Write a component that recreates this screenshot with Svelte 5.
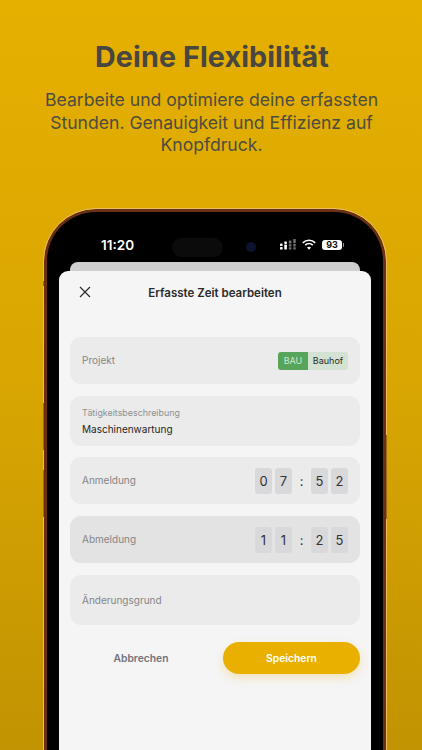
<script lang="ts">
  const felder = {
    an: ["0", "7", "5", "2"],
    ab: ["1", "1", "2", "5"],
  };
</script>

{#snippet ziffern(z: string[])}
  <div class="uhr">
    <span class="ziffer">{z[0]}</span>
    <span class="ziffer">{z[1]}</span>
    <span class="doppel">:</span>
    <span class="ziffer">{z[2]}</span>
    <span class="ziffer">{z[3]}</span>
  </div>
{/snippet}

<main class="seite">
  <header class="kopf">
    <h1>Deine Flexibilität</h1>
    <p>Bearbeite und optimiere deine erfassten Stunden. Genauigkeit und Effizienz auf Knopfdruck.</p>
  </header>

  <div class="telefon">
    <i class="taste marke-a"></i>
    <i class="taste laut1"></i>
    <i class="taste laut2"></i>
    <i class="taste power"></i>
    <div class="rahmen">
      <div class="status">
        <span class="zeit">11:20</span>
        <div class="insel"></div>
        <i class="kamera"></i>
        <div class="icons">
          <svg width="16" height="11" viewBox="0 0 16 11" fill="#fff">
            <rect x="0" y="4.500" width="2.600" height="2.400" rx=".6" />
            <rect x="0" y="8" width="2.600" height="2.600" rx=".6" />
            <rect x="4.300" y="2.500" width="2.600" height="2.400" rx=".6" />
            <rect x="4.300" y="5.600" width="2.600" height="5" rx=".6" />
            <rect x="8.800" y="1.500" width="2.600" height="3" rx=".6" opacity=".45" />
            <rect x="8.800" y="5.200" width="2.600" height="2.300" rx=".6" opacity=".45" />
            <rect x="8.800" y="8.200" width="2.600" height="2.400" rx=".6" opacity=".45" />
            <rect x="13.300" y="0" width="2.400" height="4" rx=".6" opacity=".45" />
            <rect x="13.300" y="4.800" width="2.400" height="2.700" rx=".6" opacity=".45" />
            <rect x="13.300" y="8.200" width="2.400" height="2.400" rx=".6" opacity=".45" />
          </svg>
          <svg class="wlan" width="14" height="11" viewBox="0 0 14 11" fill="none" stroke="#fff" stroke-width="1.700">
            <path d="M.8 3.800 C4.300 .4 9.700 .4 13.200 3.800" />
            <path d="M3.200 6.200 C5.400 4.200 8.600 4.200 10.800 6.200" />
            <path d="M7 10.800 L5 8.400 C6.200 7.500 7.800 7.500 9 8.400 Z" fill="#fff" stroke="none" />
          </svg>
          <div class="akku"><span>93</span></div>
        </div>
      </div>

      <div class="blatt-hinten"></div>
      <section class="blatt">
        <div class="titel">
          <svg class="schliessen" width="12" height="12" viewBox="0 0 12 12" fill="none" stroke="#2c2c2c" stroke-width="1.200">
            <path d="M1 1 L11 11 M11 1 L1 11" />
          </svg>
          <span>Erfasste Zeit bearbeiten</span>
        </div>

        <div class="feld zeile projekt">
          <span class="etikett">Projekt</span>
          <div class="marke"><b>BAU</b><span>Bauhof</span></div>
        </div>

        <div class="feld taetigkeit">
          <span class="klein">Tätigkeitsbeschreibung</span>
          <span class="wert">Maschinenwartung</span>
        </div>

        <div class="feld zeile anmeldung">
          <span class="etikett">Anmeldung</span>
          {@render ziffern(felder.an)}
        </div>

        <div class="feld zeile abmeldung">
          <span class="etikett">Abmeldung</span>
          {@render ziffern(felder.ab)}
        </div>

        <div class="feld zeile grund">
          <span class="etikett">Änderungsgrund</span>
        </div>

        <div class="aktionen">
          <button class="abbrechen">Abbrechen</button>
          <button class="speichern">Speichern</button>
        </div>
      </section>
    </div>
  </div>
</main>

<style>
  :global(body) {
    margin: 0;
  }

  .seite {
    width: 422px;
    height: 750px;
    overflow: hidden;
    box-sizing: border-box;
    background: linear-gradient(180deg, #e6b000 0%, #d9a602 50%, #c29302 100%);
    font-family: Inter, "Noto Sans", sans-serif;
    padding-top: 39px;
  }

  .kopf {
    text-align: center;
    color: #4d4c42;
    height: 170px;
  }

  h1 {
    margin: 0;
    font-size: 28.700px;
    line-height: 36px;
    font-weight: 700;
    letter-spacing: 0.1px;
    color: #474641;
    padding-left: 2px;
  }

  .kopf p {
    margin: 14px auto 0;
    width: 350px;
    font-size: 17.600px;
    line-height: 22.500px;
    font-weight: 400;
    padding-left: 1px;
  }

  .telefon {
    position: relative;
    width: 342px;
    margin-left: 44px;
  }

  .taste {
    position: absolute;
    z-index: 1;
    width: 1px;
    background: #9c6a1c;
  }

  .marke-a { left: -1px; top: 72px; height: 5px; }
  .laut1 { left: -1px; top: 194px; height: 47px; }
  .laut2 { left: -1px; top: 261px; height: 47px; }
  .power { right: -1px; top: 226px; height: 84px; }

  .rahmen {
    box-sizing: border-box;
    height: 620px;
    padding: 0 12px;
    background: #000;
    border-radius: 52px 52px 0 0;
    border: 3px solid #6a3014;
    border-bottom: 0;
    outline: 1.500px solid #ecbd62;
    display: flex;
    flex-direction: column;
    align-items: center;
  }

  .status {
    width: 100%;
    height: 50px;
    flex: none;
    padding-top: 15px;
    box-sizing: border-box;
    display: flex;
    align-items: center;
    color: #fff;
    position: relative;
  }

  .zeit {
    margin-left: 42px;
    font-size: 13.500px;
    font-weight: 600;
  }

  .insel {
    position: absolute;
    left: 113px;
    top: 26px;
    width: 51px;
    height: 19px;
    border-radius: 10px;
    background: #0b0b0c;
  }

  .kamera {
    position: absolute;
    left: 187px;
    top: 30px;
    width: 10px;
    height: 10px;
    border-radius: 50%;
    background: #0d1230;
  }

  .icons {
    margin-left: auto;
    margin-right: 27px;
    display: flex;
    align-items: center;
    gap: 6px;
  }

  .akku {
    position: relative;
    width: 20px;
    height: 10px;
    background: #fff;
    border-radius: 3px;
    color: #111;
    font-size: 9px;
    font-weight: 700;
    line-height: 10px;
    text-align: center;
    margin-right: 2px;
  }

  .akku::after {
    content: "";
    position: absolute;
    right: -2px;
    top: 3px;
    width: 1px;
    height: 4px;
    background: #8a8a8a;
  }

  .blatt-hinten {
    width: 290px;
    height: 9px;
    background: #cfcfcf;
    border-radius: 8px 8px 0 0;
    flex: none;
  }

  .blatt {
    width: 100%;
    flex: 1;
    background: #f5f5f5;
    border-radius: 9px 9px 0 0;
    padding: 0 11px;
    box-sizing: border-box;
  }

  .titel {
    height: 43px;
    position: relative;
    display: flex;
    align-items: center;
    justify-content: center;
    font-size: 11.500px;
    font-weight: 600;
    color: #2b2b2b;
  }

  .schliessen {
    position: absolute;
    left: 9px;
    top: 15px;
  }

  .feld {
    background: #ebebeb;
    border-radius: 11px;
    padding: 0 12px;
    box-sizing: border-box;
  }

  .zeile {
    display: flex;
    align-items: center;
    justify-content: space-between;
  }

  .projekt { height: 47px; margin-top: 23px; }
  .taetigkeit {
    height: 50px;
    margin-top: 12px;
    padding-bottom: 1px;
    display: flex;
    flex-direction: column;
    justify-content: center;
    gap: 5px;
  }
  .anmeldung { height: 47px; margin-top: 11px; }
  .abmeldung { height: 47px; margin-top: 12px; background: #e3e3e3; }
  .grund { height: 50px; margin-top: 12px; }

  .etikett {
    font-size: 10px;
    color: #858585;
    margin-top: -2px;
  }

  .grund .etikett {
    margin-top: 0;
  }

  .klein {
    font-size: 8.900px;
    color: #8f8f8f;
  }

  .wert {
    font-size: 10px;
    color: #1f1f1f;
  }

  .marke {
    display: flex;
    height: 18px;
    border-radius: 3px;
    overflow: hidden;
    font-size: 9px;
    line-height: 18px;
  }

  .marke b {
    font-weight: 400;
    background: #57a55a;
    color: #cfe8cf;
    width: 30px;
    text-align: center;
  }

  .marke span {
    background: #d3e2d3;
    color: #2a2a2a;
    width: 40px;
    text-align: center;
  }

  .uhr {
    display: flex;
    align-items: center;
  }

  .ziffer {
    width: 17px;
    height: 26px;
    margin-left: 3px;
    background: #d9d9dc;
    border-radius: 3px;
    display: flex;
    align-items: center;
    justify-content: center;
    font-size: 13px;
    color: #333;
  }

  .doppel {
    width: 13px;
    margin-left: 3px;
    text-align: center;
    font-size: 13px;
    color: #333;
  }

  .aktionen {
    margin-top: 17px;
    display: flex;
    align-items: center;
    justify-content: space-between;
  }

  button {
    border: 0;
    font: inherit;
    font-size: 10.300px;
    font-weight: 600;
    height: 32px;
    padding: 0;
  }

  .abbrechen {
    width: 142px;
    background: none;
    color: #73737b;
  }

  .speichern {
    width: 137px;
    background: #e9b000;
    color: #fff;
    border-radius: 16px;
    box-shadow: 0 4px 10px rgba(233, 176, 0, 0.25);
  }
</style>
